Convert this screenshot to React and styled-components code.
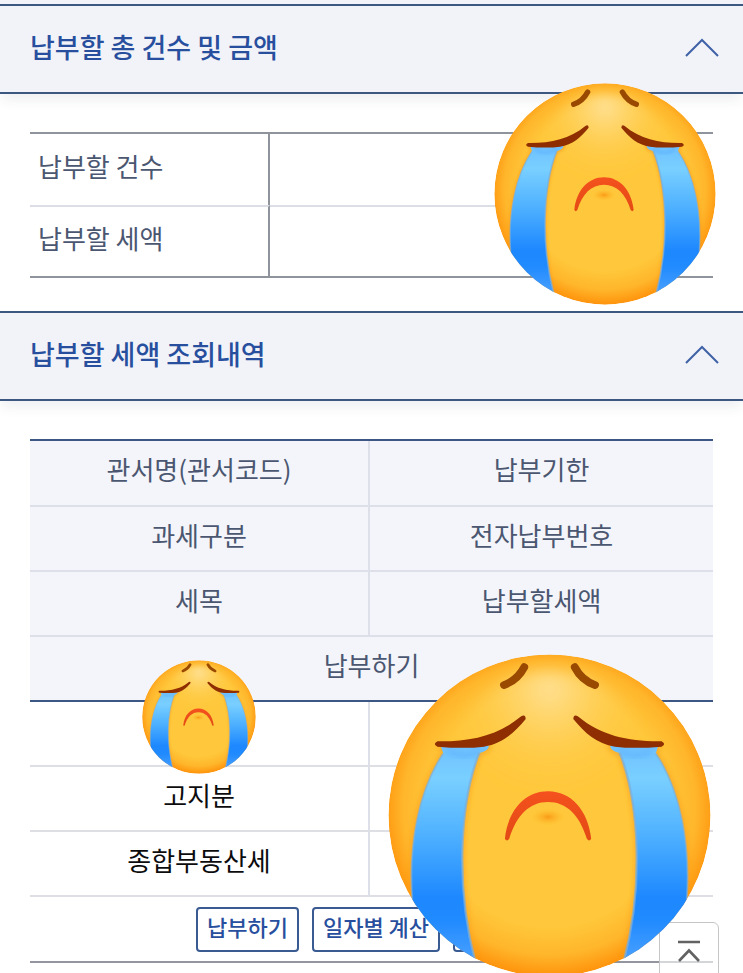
import React, { useId, useState } from "react";
import styled, { createGlobalStyle } from "styled-components";

const GlobalStyle = createGlobalStyle`
  * { box-sizing: border-box; }
  body {
    margin: 0;
    background: #fff;
    font-family: "Noto Sans CJK KR", "Noto Sans", sans-serif;
  }
`;

const Page = styled.main`
  position: relative;
  min-height: 100vh;
  padding-bottom: 11px;
  overflow: hidden;
  background: #fff;
`;

const TopStrip = styled.div`
  height: 4px;
  background: #f3f4fa;
`;

const SectionTitle = styled.h2`
  margin: 0;
  font-size: 27px;
  box-shadow: 0 8px 12px -2px rgba(40, 50, 80, 0.08);
`;

const TitleButton = styled.button`
  display: flex;
  align-items: center;
  justify-content: space-between;
  width: 100%;
  height: 90px;
  padding: 0 24px 4px 30px;
  border: 0 solid #3d5880;
  border-width: 2px 0;
  background: #f2f3f9;
  color: #284f9e;
  font: inherit;
  font-weight: 500;
  line-height: 40px;
  text-align: left;
  cursor: pointer;
`;

const Panel = styled.div`
  position: relative;
  padding: 38px 30px 0;
  margin-bottom: ${(p) => (p.$spaced ? "33px" : "0")};
`;

const Table = styled.table`
  width: 100%;
  table-layout: fixed;
  border-spacing: 0;
  font-size: 26px;
  line-height: 36px;
`;

const SummaryTable = styled(Table)`
  border-top: 2px solid #8f939b;
  border-bottom: 2px solid #8f939b;
`;

const SummaryRow = styled.tr`
  & + & > * { border-top: 2px solid #dcdee5; }
`;

const SummaryHead = styled.th`
  width: 240px;
  height: 71px;
  padding: 0 8px 8px;
  border-right: 2px solid #8f939b;
  color: #4b5771;
  font-weight: 400;
  text-align: left;
`;

const DetailTable = styled(Table)`
  border-top: 2px solid #3c5784;
  border-bottom: 2px solid #93969e;
`;

const FirstColumn = styled.col`
  width: 49.5%;
`;

const HeadCell = styled.th`
  height: 65px;
  padding: 0 0 8px;
  border-bottom: 2px solid ${(p) => (p.$last ? "#3c5784" : "#dddfe9")};
  background: #f4f5fa;
  color: #4b5771;
  font-weight: 400;
  & + & { border-left: 2px solid #dddfe9; }
  tr:first-child > & { height: 66px; }
`;

const BodyCell = styled.td`
  height: 65px;
  padding: 0 0 8px;
  border-bottom: 2px solid #dddfe5;
  color: #0c0c0e;
  text-align: center;
  & + & { border-left: 2px solid #dddfe9; }
`;

const ActionCell = styled.td`
  height: 64px;
  padding: 0;
`;

const Actions = styled.div`
  display: flex;
  justify-content: center;
  gap: 13px;
`;

const ActionButton = styled.button`
  height: 45px;
  min-width: 94px;
  padding: 0 9px 6px;
  border: 2px solid #3a5a92;
  border-radius: 4px;
  background: #fff;
  color: #284f9e;
  font: inherit;
  font-size: 22px;
  font-weight: 500;
  line-height: 32px;
  white-space: nowrap;
`;

const TopButton = styled.button`
  position: absolute;
  right: 24px;
  bottom: -6px;
  width: 60px;
  height: 58px;
  padding: 0;
  display: flex;
  justify-content: center;
  align-items: center;
  border: 1px solid #c6c6c8;
  border-radius: 0 6px 0 0;
  background: rgba(255, 255, 255, 0.6);
`;

const Sticker = styled.svg`
  position: absolute;
  z-index: 2;
  width: ${(p) => p.$size}px;
  height: ${(p) => p.$size}px;
  top: ${(p) => p.$top}px;
  ${(p) => (p.$left !== undefined ? `left: ${p.$left}px;` : `right: ${p.$right}px;`)}
  pointer-events: none;
`;

function Chevron() {
  return (
    <svg width="34" height="20" viewBox="0 0 34 20" fill="none" stroke="#3f62a6" strokeWidth="2" aria-hidden="true">
      <path d="M1 19 17 3 33 19" />
    </svg>
  );
}

function CryingFace(props) {
  const id = useId().replace(/[^a-zA-Z0-9]/g, "");
  const url = (name) => `url(#${id}${name})`;
  const tear =
    "M151 437 L250 436 Q250 447 230 451 C188 560 182 730 222 882 L222 920 L60 920 L92 752 C84 640 106 525 156 452 Z";
  const side = (
    <>
      <path d={tear} fill="none" stroke="#fb9a16" strokeWidth="9" opacity="0.65" filter={url("soft")} />
      <path d={tear} fill={url("tear")} />
      <path d="M165 446 Q198 466 232 446" fill="none" stroke="#5aaefa" strokeWidth="12" opacity="0.45" filter={url("soft")} />
      <path d="M230 451 C188 560 182 730 222 882" fill="none" stroke="#79aede" strokeWidth="5" opacity="0.7" />
      <path d="M92 752 C84 640 106 525 156 452" fill="none" stroke="#79aede" strokeWidth="4" opacity="0.6" />
      <path d="M323 274 Q309 301 281 311" fill="none" stroke="#994900" strokeWidth="16" strokeLinecap="round" />
      <path
        d="M144 427 C210 428 268 416 316 376 Q325 370 326 381 C302 410 278 432 240 438 Q200 443 144 438 Q133 433 144 427 Z"
        fill="#8f2e00"
      />
    </>
  );
  return (
    <Sticker viewBox="42 247 666 666" role="img" aria-label="우는 얼굴" {...props}>
      <defs>
        <radialGradient id={`${id}face`} gradientUnits="userSpaceOnUse" cx="375" cy="565" r="347">
          <stop offset="0" stopColor="#ffc83c" />
          <stop offset="0.7" stopColor="#ffc83c" />
          <stop offset="0.87" stopColor="#ffb62b" />
          <stop offset="1" stopColor="#ff930c" />
        </radialGradient>
        <radialGradient id={`${id}glow`} gradientUnits="userSpaceOnUse" cx="375" cy="320" r="215">
          <stop offset="0" stopColor="#ffe093" />
          <stop offset="0.35" stopColor="#ffd873" stopOpacity="0.7" />
          <stop offset="1" stopColor="#ffc83c" stopOpacity="0" />
        </radialGradient>
        <radialGradient id={`${id}chin`}>
          <stop offset="0" stopColor="#fa9b17" />
          <stop offset="1" stopColor="#ffc02f" stopOpacity="0" />
        </radialGradient>
        <linearGradient id={`${id}tear`} gradientUnits="userSpaceOnUse" x1="0" y1="436" x2="0" y2="885">
          <stop offset="0" stopColor="#6fc1ff" />
          <stop offset="0.15" stopColor="#79cfff" />
          <stop offset="0.4" stopColor="#50b2ff" />
          <stop offset="0.7" stopColor="#1d88ff" />
          <stop offset="0.8" stopColor="#208aff" />
          <stop offset="1" stopColor="#4ca2ff" />
        </linearGradient>
        <linearGradient id={`${id}mouth`} x1="0" y1="0" x2="0" y2="1">
          <stop offset="0" stopColor="#f4511e" />
          <stop offset="1" stopColor="#e34a14" />
        </linearGradient>
        <filter id={`${id}soft`} x="-30%" y="-60%" width="160%" height="220%">
          <feGaussianBlur stdDeviation="5" />
        </filter>
        <filter id={`${id}haze`} x="-30%" y="-30%" width="160%" height="160%">
          <feGaussianBlur stdDeviation="14" />
        </filter>
        <clipPath id={`${id}clip`}>
          <circle cx="375" cy="580" r="332" />
        </clipPath>
      </defs>
      <g clipPath={url("clip")}>
        <circle cx="375" cy="580" r="332" fill={url("face")} />
        <circle cx="375" cy="492" r="212" fill={url("glow")} filter={url("haze")} />
        <g>{side}</g>
        <g transform="translate(750 0) scale(-1 1)">{side}</g>
        <ellipse cx="372" cy="583" rx="38" ry="19" fill={url("chin")} />
        <path
          d="M283 628 C289 570 324 530 372 530 C420 530 455 570 461 628 Q457 635 452 628 C437 579 410 552 372 552 C334 552 307 579 292 628 Q287 635 283 628 Z"
          fill={url("mouth")}
        />
      </g>
    </Sticker>
  );
}

function Section({ title, spaced, children }) {
  const [open, setOpen] = useState(true);
  return (
    <section>
      <SectionTitle>
        <TitleButton type="button" aria-expanded={open} onClick={() => setOpen(!open)}>
          {title}
          <Chevron />
        </TitleButton>
      </SectionTitle>
      {open && <Panel $spaced={spaced}>{children}</Panel>}
    </section>
  );
}

const headings = [
  ["관서명(관서코드)", "납부기한"],
  ["과세구분", "전자납부번호"],
  ["세목", "납부할세액"],
];

const values = ["", "고지분", "종합부동산세"];

export default function App() {
  return (
    <Page>
      <GlobalStyle />
      <TopStrip />
      <Section title="납부할 총 건수 및 금액" spaced>
        <SummaryTable>
          <tbody>
            {["납부할 건수", "납부할 세액"].map((label) => (
              <SummaryRow key={label}>
                <SummaryHead scope="row">{label}</SummaryHead>
                <td />
              </SummaryRow>
            ))}
          </tbody>
        </SummaryTable>
        <CryingFace $size={222} $top={-11} $right={27} />
      </Section>
      <Section title="납부할 세액 조회내역">
        <DetailTable>
          <colgroup>
            <FirstColumn />
            <col />
          </colgroup>
          <thead>
            {headings.map(([left, right]) => (
              <tr key={left}>
                <HeadCell scope="col">{left}</HeadCell>
                <HeadCell scope="col">{right}</HeadCell>
              </tr>
            ))}
            <tr>
              <HeadCell scope="colgroup" colSpan={2} $last>납부하기</HeadCell>
            </tr>
          </thead>
          <tbody>
            {values.map((value) => (
              <tr key={value}>
                <BodyCell>{value}</BodyCell>
                <BodyCell />
              </tr>
            ))}
            <tr>
              <ActionCell colSpan={2}>
                <Actions>
                  <ActionButton type="button">납부하기</ActionButton>
                  <ActionButton type="button">일자별 계산</ActionButton>
                  <ActionButton type="button" aria-label="상세보기" />
                </Actions>
              </ActionCell>
            </tr>
          </tbody>
        </DetailTable>
        <CryingFace $size={114} $top={259} $left={142} />
        <CryingFace $size={323} $top={253} $right={32} />
      </Section>
      <TopButton type="button" aria-label="맨 위로">
        <svg width="22" height="22" viewBox="0 0 22 22" fill="none" stroke="#626262" strokeWidth="2.6" aria-hidden="true">
          <path d="M0 2H22M1 21 11 10.5 21 21" />
        </svg>
      </TopButton>
    </Page>
  );
}
